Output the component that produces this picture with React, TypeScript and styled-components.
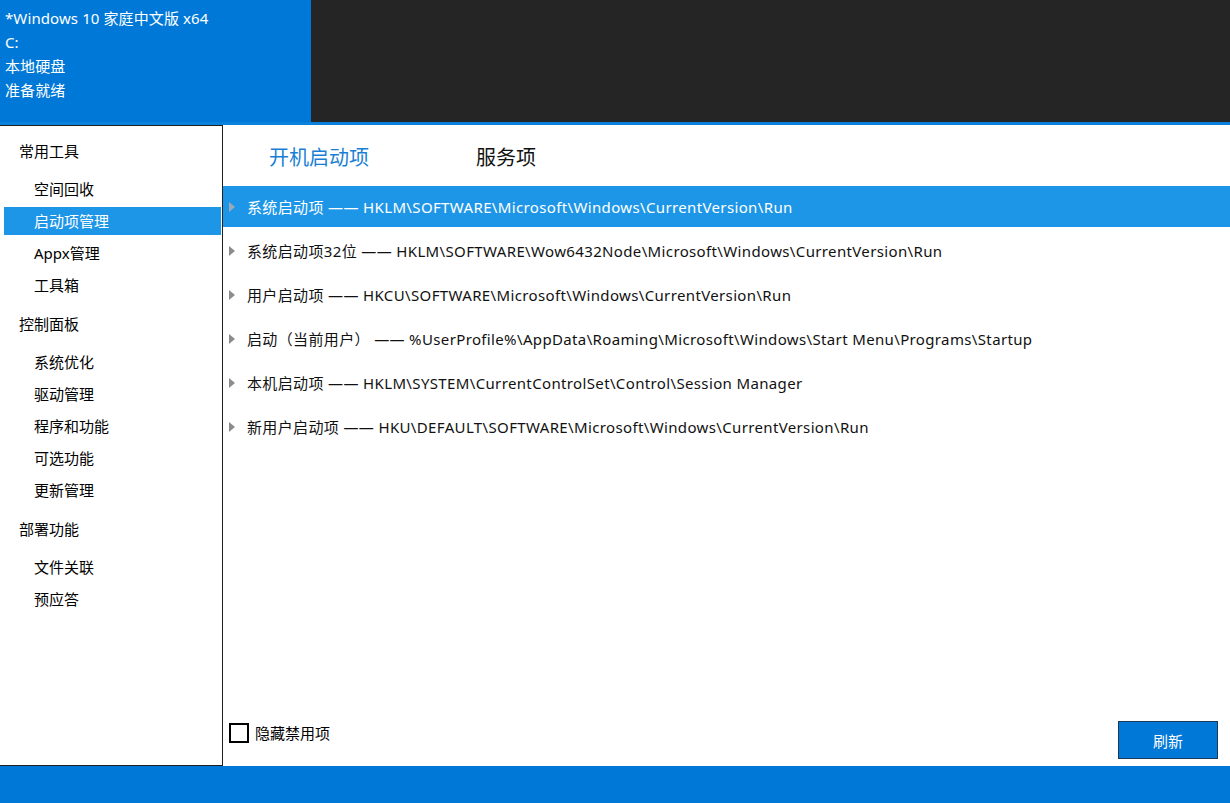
import React, { useState } from 'react';
import styled, { createGlobalStyle } from 'styled-components';

const GlobalStyle = createGlobalStyle`
  html, body {
    margin: 0;
    padding: 0;
    background: #ffffff;
  }
  body {
    font-family: "Noto Sans", "Noto Sans CJK SC", sans-serif;
    font-size: 15px;
    color: #000;
  }
`;

const sections = [
  { title: '常用工具', items: ['空间回收', '启动项管理', 'Appx管理', '工具箱'] },
  { title: '控制面板', items: ['系统优化', '驱动管理', '程序和功能', '可选功能', '更新管理'] },
  { title: '部署功能', items: ['文件关联', '预应答'] },
];

const entries = [
  '系统启动项 —— HKLM\\SOFTWARE\\Microsoft\\Windows\\CurrentVersion\\Run',
  '系统启动项32位 —— HKLM\\SOFTWARE\\Wow6432Node\\Microsoft\\Windows\\CurrentVersion\\Run',
  '用户启动项 —— HKCU\\SOFTWARE\\Microsoft\\Windows\\CurrentVersion\\Run',
  '启动（当前用户） —— %UserProfile%\\AppData\\Roaming\\Microsoft\\Windows\\Start Menu\\Programs\\Startup',
  '本机启动项 —— HKLM\\SYSTEM\\CurrentControlSet\\Control\\Session Manager',
  '新用户启动项 —— HKU\\DEFAULT\\SOFTWARE\\Microsoft\\Windows\\CurrentVersion\\Run',
];

const App: React.FC = () => {
  const [selected, setSelected] = useState(0);
  const [tab, setTab] = useState(0);
  const [hideDisabled, setHideDisabled] = useState(false);

  return (
    <Window>
      <GlobalStyle />
      <Header>
        <InfoPanel>
          <div>*Windows 10 家庭中文版 x64</div>
          <div>C:</div>
          <div>本地硬盘</div>
          <div>准备就绪</div>
        </InfoPanel>
        <DarkPanel />
      </Header>

      <Body>
        <Sidebar>
          {sections.map((s) => (
            <React.Fragment key={s.title}>
              <GroupTitle>{s.title}</GroupTitle>
              {s.items.map((item) => (
                <NavItem key={item}>
                  <NavLabel $active={item === '启动项管理'}>{item}</NavLabel>
                </NavItem>
              ))}
            </React.Fragment>
          ))}
        </Sidebar>

        <Main>
          <Tabs>
            <Tab $active={tab === 0} onClick={() => setTab(0)}>开机启动项</Tab>
            <Tab $active={tab === 1} onClick={() => setTab(1)}>服务项</Tab>
          </Tabs>

          <List>
            {entries.map((e, i) => (
              <Row key={e} $selected={i === selected} onClick={() => setSelected(i)}>
                <Arrow $selected={i === selected} />
                <RowText>{e}</RowText>
              </Row>
            ))}
          </List>

          <Footer>
            <CheckLabel onClick={() => setHideDisabled(!hideDisabled)}>
              <Box $checked={hideDisabled} />
              <span>隐藏禁用项</span>
            </CheckLabel>
            <RefreshButton>刷新</RefreshButton>
          </Footer>
        </Main>
      </Body>

      <StatusBar />
    </Window>
  );
};

const Window = styled.div`
  width: 1230px;
  height: 803px;
  display: flex;
  flex-direction: column;
  overflow: hidden;
`;

const Header = styled.header`
  height: 122px;
  display: flex;
  border-bottom: 3px solid #0a82dc;
`;

const InfoPanel = styled.div`
  width: 311px;
  background: #0078d7;
  color: #fff;
  padding: 6px 0 0 5px;
  box-sizing: border-box;
  line-height: 24px;
  font-size: 15px;
  letter-spacing: 0.1px;
`;

const DarkPanel = styled.div`
  flex: 1;
  background: #252525;
`;

const Body = styled.div`
  flex: 1;
  display: flex;
  min-height: 0;
`;

const Sidebar = styled.nav`
  width: 223px;
  box-sizing: border-box;
  border-top: 1px solid #1f1f1f;
  border-right: 1px solid #1f1f1f;
  border-bottom: 1px solid #1f1f1f;
  padding-top: 2px;
  display: flex;
  flex-direction: column;
`;

const GroupTitle = styled.div`
  height: 32px;
  line-height: 32px;
  margin: 7px 0 6px;
  padding-left: 19px;
`;

const NavItem = styled.div`
  height: 32px;
  padding: 2px 1px 2px 4px;
  box-sizing: border-box;
`;

const NavLabel = styled.div<{ $active?: boolean }>`
  height: 28px;
  line-height: 28px;
  padding-left: 30px;
  background: ${(p) => (p.$active ? '#1e96e8' : 'transparent')};
  color: ${(p) => (p.$active ? '#fff' : '#000')};
`;

const Main = styled.main`
  flex: 1;
  display: flex;
  flex-direction: column;
  min-width: 0;
`;

const Tabs = styled.div`
  height: 61px;
  display: flex;
  align-items: center;
  gap: 107px;
  padding-left: 46px;
  padding-top: 1px;
  box-sizing: border-box;
`;

const Tab = styled.div<{ $active?: boolean }>`
  font-size: 20px;
  color: ${(p) => (p.$active ? '#1a7fd4' : '#111')};
  cursor: pointer;
`;

const List = styled.div`
  flex: 1;
  display: flex;
  flex-direction: column;
`;

const Row = styled.div<{ $selected?: boolean }>`
  height: 41px;
  margin-bottom: 3px;
  display: flex;
  align-items: center;
  padding-left: 6px;
  background: ${(p) => (p.$selected ? '#1e96e8' : 'transparent')};
  color: ${(p) => (p.$selected ? '#fff' : '#111')};
  cursor: default;
`;

const Arrow = styled.span<{ $selected?: boolean }>`
  width: 0;
  height: 0;
  border-top: 5px solid transparent;
  border-bottom: 5px solid transparent;
  border-left: 6px solid ${(p) => (p.$selected ? '#9aa9b8' : '#8c8c8c')};
  margin-right: 12px;
`;

const RowText = styled.span`
  white-space: nowrap;
  letter-spacing: 0.36px;
`;

const Footer = styled.div`
  display: flex;
  align-items: flex-end;
  justify-content: space-between;
  padding: 0 12px 7px 6px;
`;

const CheckLabel = styled.label`
  display: flex;
  align-items: center;
  gap: 6px;
  margin-bottom: 16px;
  cursor: pointer;
`;

const Box = styled.span<{ $checked?: boolean }>`
  width: 20px;
  height: 20px;
  box-sizing: border-box;
  border: 2px solid #000;
  background: ${(p) => (p.$checked ? '#0078d7' : '#fff')};
`;

const RefreshButton = styled.button`
  width: 100px;
  height: 38px;
  background: #0078d7;
  border: 1px solid #1b3a57;
  color: #fff;
  font-family: inherit;
  font-size: 15px;
  cursor: pointer;
`;

const StatusBar = styled.footer`
  height: 37px;
  background: #0078d7;
`;

export default App;
